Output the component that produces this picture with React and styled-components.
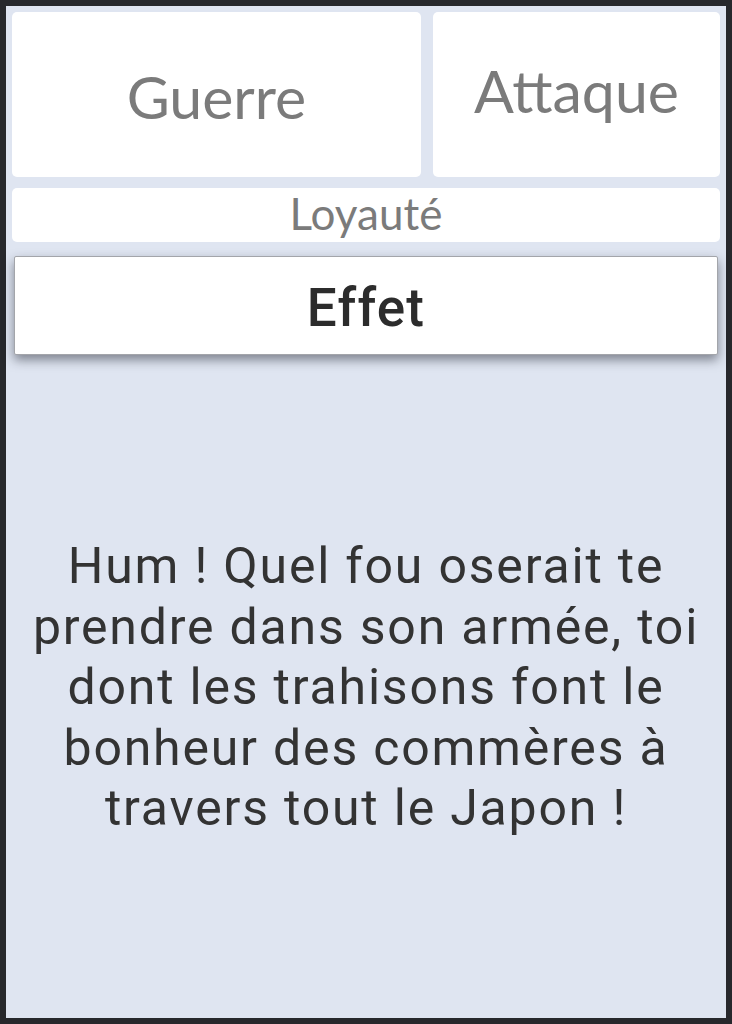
import React from 'react';
import styled, { createGlobalStyle } from 'styled-components';

const GlobalStyle = createGlobalStyle`
  html, body {
    margin: 0;
    padding: 0;
    background: #27282c;
  }
  #root {
    width: 732px;
    height: 1024px;
  }
`;

const Card = styled.div`
  box-sizing: border-box;
  width: 732px;
  height: 1024px;
  border: 6px solid #27282c;
  background: #dfe5f1;
  padding: 6px;
  display: flex;
  flex-direction: column;
`;

const StatRow = styled.div`
  display: grid;
  grid-template-columns: 409px 1fr;
  gap: 12px;
  height: 165px;
`;

const StatBox = styled.div`
  background: #ffffff;
  border-radius: 5px;
  display: flex;
  align-items: center;
  justify-content: center;
  font-family: Lato, 'Liberation Sans', sans-serif;
  font-size: 59px;
  color: #7b7b7b;
  padding-top: ${(p) => (p.$raised ? '0' : '4px')};
  padding-bottom: ${(p) => (p.$raised ? '8px' : '0')};
`;

const Loyalty = styled.div`
  margin-top: 11px;
  height: 54px;
  background: #ffffff;
  border-radius: 5px;
  font-family: Lato, 'Liberation Sans', sans-serif;
  font-size: 44px;
  line-height: 50px;
  text-align: center;
  color: #7b7b7b;
`;

const EffectHeader = styled.div`
  box-sizing: border-box;
  margin: 14px 2px 0;
  height: 99px;
  background: #ffffff;
  border: 1px solid #a3a5aa;
  border-radius: 2px;
  box-shadow: 0 5px 11px rgba(30, 34, 46, 0.5);
  display: flex;
  align-items: center;
  justify-content: center;
  padding-top: 4px;
  font-family: Roboto, 'Open Sans', sans-serif;
  font-weight: 500;
  font-size: 53px;
  letter-spacing: 1.2px;
  color: #2c2c2c;
`;

const EffectBody = styled.div`
  flex: 1;
  display: flex;
  align-items: center;
  justify-content: center;
  padding: 8px 2px 0;
`;

const EffectText = styled.p`
  margin: 0;
  text-align: center;
  font-family: Roboto, 'Open Sans', sans-serif;
  font-size: 50px;
  line-height: 60.5px;
  letter-spacing: 1.8px;
  color: #333333;
`;

export default function App() {
  return (
    <>
      <GlobalStyle />
      <Card>
        <StatRow>
          <StatBox>Guerre</StatBox>
          <StatBox $raised>Attaque</StatBox>
        </StatRow>
        <Loyalty>Loyauté</Loyalty>
        <EffectHeader>Effet</EffectHeader>
        <EffectBody>
          <EffectText>
            Hum ! Quel fou oserait te
            <br />
            prendre dans son armée, toi
            <br />
            dont les trahisons font le
            <br />
            bonheur des commères à
            <br />
            travers tout le Japon !
          </EffectText>
        </EffectBody>
      </Card>
    </>
  );
}
